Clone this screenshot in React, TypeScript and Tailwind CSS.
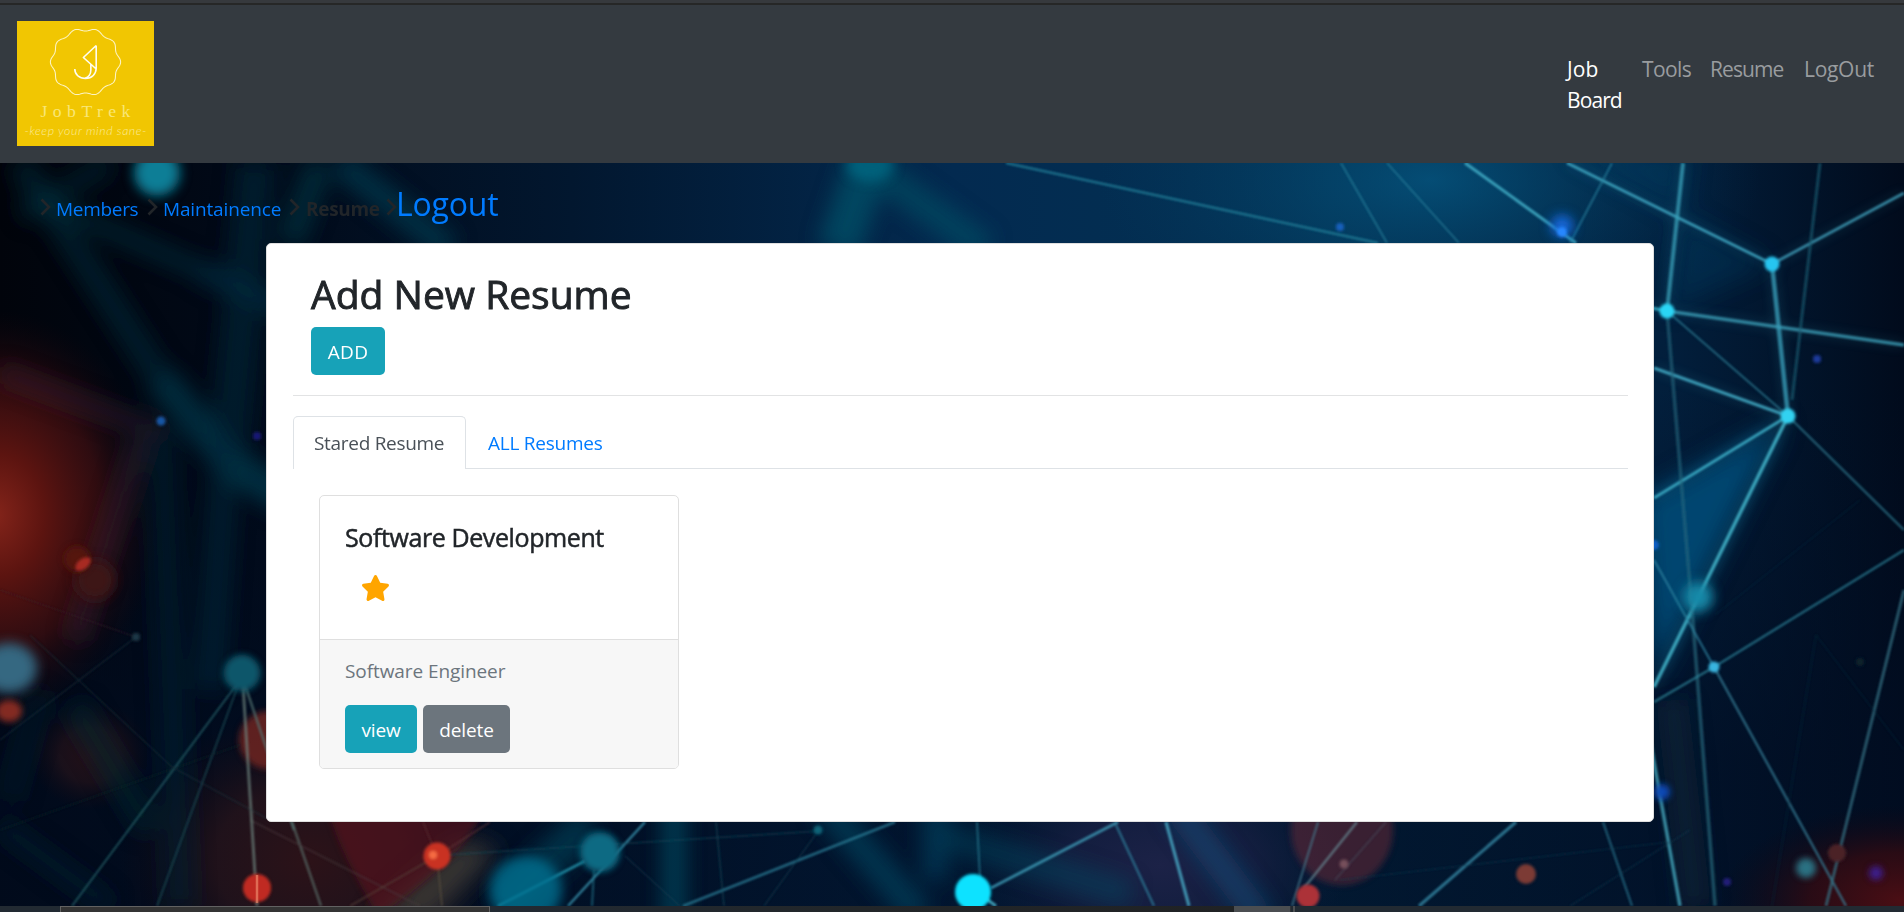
import React from "react";

const badgePath =
  Array.from({ length: 181 }, (_, i) => {
    const t = (i * 2 * Math.PI) / 180;
    const r = 32.4 + 1.4 * Math.cos(10 * t);
    return `${i === 0 ? "M" : "L"}${(80 + (r - 1) * Math.cos(t)).toFixed(2)} ${(62 + r * Math.sin(t)).toFixed(2)}`;
  }).join(" ") + "Z";

function Logo() {
  return (
    <svg className="h-[125px] w-[137px] shrink-0" viewBox="16 21 128 125" preserveAspectRatio="none">
      <rect x="16" y="21" width="128" height="125" fill="#f1c602" />
      <path d={badgePath} fill="none" stroke="#fdf4c4" strokeWidth="1" />
      <path
        d="M90 45.5 78 57.5 90 69M90 45.5V68C90 74 86 78.5 80 78.5 74 78.5 70 74.500 70 69M85 64V70C85 74 83 77 79.500 78.300"
        fill="none"
        stroke="#fffdf0"
        strokeWidth="1.5"
        strokeLinejoin="round"
      />
      <text x="38" y="117" fontSize="16.5" textLength="84" fill="#f9e678" fontFamily="Liberation Serif, serif">
        JobTrek
      </text>
      <text x="23" y="135" fontSize="11.5" textLength="114" fill="#fbeb9c" fontStyle="italic" fontWeight="300" fontFamily="Lato, sans-serif">
        -keep your mind sane-
      </text>
    </svg>
  );
}

type Line = [number, number, number, number, number, string, number];

const sharpLines: Line[] = [
  [1567, 163, 1772, 264, 3, "#3fa9c4", 0.85],
  [1772, 264, 1904, 193, 3, "#3f9fba", 0.8],
  [1683, 163, 1667, 311, 4, "#3aa0b8", 0.75],
  [1560, 290, 1667, 311, 3, "#38b8d0", 0.8],
  [1667, 311, 1904, 345, 3.5, "#3fa3bd", 0.75],
  [1654, 368, 1788, 416, 3, "#46b4cf", 0.8],
  [1772, 264, 1788, 416, 4.5, "#3aa0bb", 0.75],
  [1788, 416, 1654, 498, 3, "#3eb0c8", 0.85],
  [1788, 416, 1654, 687, 3.6, "#43b5ca", 0.85],
  [1667, 311, 1788, 416, 1.8, "#2f8299", 0.7],
  [1820, 163, 1792, 400, 3, "#1f6075", 0.65],
  [1788, 416, 1904, 530, 2.4, "#2e7388", 0.75],
  [1667, 311, 1692, 610, 3.5, "#286c80", 0.6],
  [1692, 610, 1715, 906, 3.5, "#286c80", 0.65],
  [1654, 560, 1714, 667, 2, "#2f86a2", 0.75],
  [1714, 667, 1846, 906, 2.4, "#357f98", 0.75],
  [1654, 702, 1714, 667, 2.2, "#308ba0", 0.7],
  [1714, 667, 1904, 550, 2.2, "#2c7f94", 0.75],
  [1904, 590, 1826, 906, 3, "#347083", 0.75],
  [1650, 740, 1680, 906, 3.5, "#46a5bb", 0.8],
  [1816, 635, 1772, 906, 2, "#123344", 0.3],
  [1816, 635, 1904, 750, 1.5, "#123344", 0.3],
  [1860, 500, 1715, 615, 1.5, "#123848", 0.3],
  [1006, 163, 1378, 243, 2.8, "#23809a", 0.75],
  [1341, 163, 1387, 243, 1.6, "#2c8aa3", 0.65],
  [1387, 163, 1459, 243, 1.6, "#2c8aa3", 0.65],
  [1465, 163, 1576, 243, 3, "#43b0c8", 0.85],
  [1612, 163, 1570, 243, 1.8, "#2b83a0", 0.7],
  [991, 888, 1118, 822, 3, "#3f9fba", 0.8],
  [977, 822, 980, 878, 1.8, "#2a7f96", 0.7],
  [985, 898, 996, 906, 3, "#4fbfd4", 0.8],
  [1116, 825, 1154, 906, 2.2, "#2f819c", 0.75],
  [1166, 822, 1189, 906, 3.2, "#48aac6", 0.8],
  [1318, 822, 1292, 906, 2, "#467e90", 0.7],
  [1357, 822, 1304, 888, 2.4, "#688c96", 0.7],
  [1386, 822, 1335, 880, 1.5, "#4b5868", 0.5],
  [1516, 822, 1419, 906, 3.2, "#3587a3", 0.8],
  [1603, 822, 1632, 906, 2.2, "#27718a", 0.75],
  [1340, 880, 1670, 842, 1.2, "#1a4055", 0.5],
  [1570, 906, 1690, 830, 1.2, "#1a4055", 0.5],
  [498, 906, 585, 861, 3, "#2aa0b8", 0.75],
  [645, 822, 568, 906, 2.5, "#3c9fba", 0.75],
  [594, 870, 592, 906, 2, "#287f95", 0.6],
  [683, 906, 895, 822, 2.5, "#2b7f98", 0.75],
  [445, 855, 820, 831, 1.4, "#1b5262", 0.5],
  [716, 822, 724, 906, 1.4, "#1b5262", 0.6],
  [625, 856, 680, 906, 1.4, "#1b4556", 0.5],
  [816, 834, 764, 906, 1.4, "#1b4556", 0.5],
  [292, 822, 321, 906, 2.5, "#4f5c59", 0.85],
  [250, 820, 420, 906, 1.5, "#4a3a3d", 0.6],
  [437, 856, 350, 906, 1.6, "#564039", 0.7],
  [437, 856, 490, 822, 1.6, "#5b3034", 0.7],
  [437, 856, 423, 822, 1.4, "#5b3034", 0.7],
  [437, 856, 442, 906, 1.6, "#5c5040", 0.7],
  [240, 680, 72, 906, 2, "#25656c", 0.75],
  [240, 680, 157, 906, 1.7, "#1c4f58", 0.75],
  [243, 685, 257, 906, 3, "#6b817b", 0.7],
  [245, 685, 294, 830, 2.5, "#537472", 0.7],
  [0, 590, 136, 637, 1.3, "#38232f", 0.6],
  [0, 740, 136, 637, 1.5, "#1f3a46", 0.5],
  [30, 635, 172, 767, 1.4, "#1a3440", 0.5],
  [172, 767, 266, 818, 1.4, "#244048", 0.5],
  [0, 830, 240, 745, 1.4, "#12252c", 0.5],
];

const beams: Line[] = [
  [20, 163, 160, 378, 26, "#033040", 0.5],
  [160, 378, 232, 465, 32, "#044c60", 0.5],
  [232, 465, 290, 500, 34, "#045065", 0.5],
  [40, 200, 200, 270, 18, "#033848", 0.5],
  [200, 270, 300, 315, 24, "#03384d", 0.55],
  [110, 163, 20, 215, 22, "#032e3a", 0.5],
  [256, 163, 228, 460, 40, "#02293a", 0.6],
  [162, 430, 180, 906, 32, "#032836", 0.45],
  [224, 470, 210, 690, 28, "#03394b", 0.4],
  [0, 372, 160, 432, 18, "#3a2230", 0.5],
  [140, 440, 75, 640, 22, "#332331", 0.45],
  [75, 705, 150, 830, 26, "#0a2a33", 0.5],
  [0, 825, 110, 906, 22, "#042530", 0.5],
  [40, 690, 10, 800, 22, "#042530", 0.4],
  [320, 163, 290, 243, 28, "#033646", 0.6],
  [340, 163, 450, 250, 28, "#034055", 0.6],
  [868, 163, 838, 250, 42, "#065c72", 0.6],
  [875, 170, 985, 250, 30, "#055468", 0.55],
  [674, 800, 674, 926, 22, "#055269", 0.65],
  [825, 805, 920, 916, 30, "#064c68", 0.55],
  [935, 805, 935, 880, 26, "#064c68", 0.5],
  [940, 835, 1130, 895, 28, "#105068", 0.4],
  [1175, 805, 1262, 920, 28, "#154f7c", 0.55],
  [1672, 700, 1695, 906, 32, "#173646", 0.35],
  [590, 822, 500, 906, 36, "#05455c", 0.6],
];

const renderLines = (lines: Line[]) =>
  lines.map(([x1, y1, x2, y2, w, c, o], i) => (
    <line key={i} x1={x1} y1={y1} x2={x2} y2={y2} strokeWidth={w} stroke={c} opacity={o} />
  ));

function NetworkBackdrop() {
  return (
    <svg className="absolute inset-0 h-full w-full" viewBox="0 163 1904 743" preserveAspectRatio="none" aria-hidden="true">
      <defs>
        <linearGradient id="base">
          <stop offset="0" stopColor="#01040b" />
          <stop offset=".14" stopColor="#010a19" />
          <stop offset=".3" stopColor="#02172f" />
          <stop offset=".5" stopColor="#032a50" />
          <stop offset=".7" stopColor="#033253" />
          <stop offset=".88" stopColor="#021e3b" />
          <stop offset="1" stopColor="#010b1c" />
        </linearGradient>
        <linearGradient id="floor" x1="0" y1="0" x2="0" y2="1">
          <stop offset=".3" stopColor="#010d22" stopOpacity="0" />
          <stop offset=".8" stopColor="#010d22" stopOpacity=".7" />
        </linearGradient>
        <radialGradient id="ember">
          <stop offset="0" stopColor="#84241a" />
          <stop offset=".3" stopColor="#5c1410" />
          <stop offset=".65" stopColor="#360d10" stopOpacity=".85" />
          <stop offset="1" stopColor="#14060d" stopOpacity="0" />
        </radialGradient>
        <radialGradient id="azure">
          <stop offset="0" stopColor="#05557f" stopOpacity=".8" />
          <stop offset="1" stopColor="#033a60" stopOpacity="0" />
        </radialGradient>
        <radialGradient id="cornerRed">
          <stop offset="0" stopColor="#4a0e14" />
          <stop offset=".5" stopColor="#330b12" stopOpacity=".8" />
          <stop offset="1" stopColor="#100713" stopOpacity="0" />
        </radialGradient>
        <radialGradient id="maroon">
          <stop offset="0" stopColor="#2c1218" />
          <stop offset=".5" stopColor="#25131a" stopOpacity=".85" />
          <stop offset="1" stopColor="#150b14" stopOpacity="0" />
        </radialGradient>
        <radialGradient id="violet">
          <stop offset="0" stopColor="#1c2247" />
          <stop offset=".5" stopColor="#192044" stopOpacity=".75" />
          <stop offset="1" stopColor="#101c3c" stopOpacity="0" />
        </radialGradient>
        <filter id="soft" filterUnits="userSpaceOnUse" x="-60" y="103" width="2024" height="863">
          <feGaussianBlur stdDeviation="12" />
        </filter>
        <filter id="halo" filterUnits="userSpaceOnUse" x="-60" y="103" width="2024" height="863">
          <feGaussianBlur stdDeviation="6" />
        </filter>
        <filter id="glow" filterUnits="userSpaceOnUse" x="-60" y="103" width="2024" height="863">
          <feGaussianBlur stdDeviation="3" />
        </filter>
        <filter id="dot" filterUnits="userSpaceOnUse" x="-60" y="103" width="2024" height="863">
          <feGaussianBlur stdDeviation="1.8" />
        </filter>
        <filter id="line" filterUnits="userSpaceOnUse" x="-60" y="103" width="2024" height="863">
          <feGaussianBlur stdDeviation=".8" />
        </filter>
        <filter id="beam" filterUnits="userSpaceOnUse" x="-60" y="103" width="2024" height="863">
          <feGaussianBlur stdDeviation="10" />
        </filter>
      </defs>
      <rect y="163" width="1904" height="743" fill="url(#base)" />
      <rect y="163" width="1904" height="743" fill="url(#floor)" />
      <ellipse cx="1430" cy="180" rx="330" ry="160" fill="url(#azure)" />
      <ellipse cx="-5" cy="515" rx="165" ry="205" fill="url(#ember)" />
      <ellipse cx="1900" cy="900" rx="180" ry="95" fill="url(#cornerRed)" />
      <ellipse cx="310" cy="860" rx="190" ry="150" fill="url(#maroon)" />
      <ellipse cx="90" cy="755" rx="60" ry="55" fill="url(#maroon)" opacity=".8" />
      <ellipse cx="1160" cy="865" rx="190" ry="110" fill="url(#violet)" />
      <g filter="url(#soft)">
        <path d="M1640 500 1784 420 1654 680Z" fill="#034a77" opacity=".9" />
        <path d="M1567 150 1690 150 1667 311 1772 264Z" fill="#08466a" opacity=".35" />
        <path d="M370 920 460 840 500 850 430 920Z" fill="#42403a" opacity=".8" />
      </g>
      <g filter="url(#beam)">{renderLines(beams)}</g>
      <g filter="url(#glow)">
        <path d="M328 810H485C465 850 430 880 378 916 358 880 340 850 328 810Z" fill="#571720" opacity=".65" />
        <ellipse cx="1342" cy="830" rx="51" ry="55" fill="#682737" opacity=".55" />
        <circle cx="268" cy="740" r="29" fill="#7c2923" opacity=".75" />
      </g>
      <g filter="url(#halo)" opacity=".4">{renderLines(sharpLines.slice(0, 9))}</g>
      <g filter="url(#line)">{renderLines(sharpLines)}</g>
      <g filter="url(#halo)">
        <circle cx="157" cy="173" r="23" fill="#097e96" />
        <ellipse cx="526" cy="890" rx="36" ry="34" fill="#067090" opacity=".8" />
        <ellipse cx="870" cy="165" rx="24" ry="16" fill="#087189" opacity=".7" />
        <ellipse cx="9" cy="668" rx="28" ry="25" fill="#356781" />
        <circle cx="1698" cy="597" r="15" fill="#1589a8" />
        <circle cx="1562" cy="226" r="11" fill="#126be0" />
        <circle cx="95" cy="580" r="20" fill="#3d1516" />
      </g>
      <g filter="url(#glow)">
        <circle cx="1806" cy="868" r="10" fill="#2c7182" />
        <circle cx="242" cy="673" r="18.5" fill="#07566b" />
        <circle cx="600" cy="852" r="20" fill="#086b83" />
        <circle cx="77" cy="559" r="13" fill="#541710" />
        <ellipse cx="9" cy="711" rx="13" ry="11" fill="#832b24" />
        <circle cx="1876" cy="873" r="7" fill="#3d1e8c" />
        <circle cx="1662" cy="792" r="8" fill="#1048b5" />
      </g>
      <g filter="url(#dot)">
        <circle cx="973" cy="892" r="18" fill="#10e2ff" />
        <circle cx="1772" cy="264" r="7.500" fill="#26c5f0" />
        <circle cx="1667" cy="311" r="7.500" fill="#2ad6f5" />
        <circle cx="1788" cy="416" r="7.500" fill="#30d2f1" />
        <circle cx="1714" cy="667" r="5.500" fill="#38b4df" />
        <circle cx="437" cy="856" r="13.500" fill="#c93324" />
        <circle cx="433" cy="855" r="4" fill="#f56b42" />
        <circle cx="257" cy="888" r="14" fill="#c02c20" />
        <circle cx="1308" cy="896" r="11.500" fill="#ac3137" />
        <circle cx="1526" cy="874" r="10" fill="#7b3a35" />
        <circle cx="1837" cy="853" r="9" fill="#4b2427" />
        <ellipse cx="83" cy="564" rx="9" ry="5" transform="rotate(-38 83 564)" fill="#a82a24" />
        <circle cx="161" cy="421" r="4.500" fill="#1257a5" />
        <circle cx="257" cy="436" r="4" fill="#171577" />
        <circle cx="136" cy="637" r="4" fill="#1b3947" />
        <circle cx="1340" cy="227" r="4" fill="#1460bd" />
        <circle cx="1562" cy="232" r="5" fill="#2687ff" />
        <circle cx="1654" cy="545" r="5" fill="#105fc4" />
        <circle cx="1817" cy="359" r="4" fill="#1c3a9b" />
        <circle cx="1727" cy="882" r="4" fill="#241e79" />
        <circle cx="1860" cy="662" r="4" fill="#0a202c" />
        <circle cx="818" cy="830" r="4.500" fill="#0f6478" />
        <circle cx="1344" cy="864" r="4.500" fill="#76505c" />
      </g>
      <path d="M257 875V903" stroke="#f09070" strokeWidth="2.500" opacity=".65" />
    </svg>
  );
}

function Chevron() {
  return (
    <svg className="h-[18px] w-[11px] shrink-0" viewBox="0 0 11 18" fill="none" stroke="#212529" strokeWidth="2.600">
      <path d="M1.500 1.500 9 9 1.500 16.500" />
    </svg>
  );
}

export default function App() {
  return (
    <div className="flex h-[912px] w-full flex-col overflow-hidden bg-[#343a40] font-['Open_Sans','Noto_Sans',sans-serif] text-[19px] text-[#212529]">
      <div className="h-[5px] shrink-0 border-b-2 border-[#262727] bg-[#36393d]" />
      <header className="flex h-[158px] shrink-0 items-start bg-[#343a40] pt-4 pr-[30px] pl-[17px]">
        <Logo />
        <nav className="mt-[33px] ml-auto flex items-start text-[21px] leading-[31px] text-[#999c9f]">
          <a className="w-[75px] text-white">
            <span className="block tracking-[0.1px]">Job</span>
            <span className="block tracking-[-0.9px]">Board</span>
          </a>
          <a className="w-[68px] tracking-[-0.6px]">Tools</a>
          <a className="w-[94px] tracking-[-0.9px]">Resume</a>
          <a className="w-[70px] tracking-[-0.3px] whitespace-nowrap">LogOut</a>
        </nav>
      </header>

      <main className="relative h-[743px] shrink-0 overflow-hidden">
        <NetworkBackdrop />
        <div className="relative">
          <div className="flex h-20 items-baseline pt-[17px] pl-10 leading-[48px] whitespace-nowrap text-[#007bff]">
            <Chevron />
            <a className="ml-[5px] w-[91px] tracking-[-0.3px]">Members</a>
            <Chevron />
            <a className="ml-[5px] w-[126px] tracking-[-0.15px]">Maintainence</a>
            <Chevron />
            <b className="ml-[6px] w-[80px] tracking-[-0.3px] text-[#212529]">Resume</b>
            <Chevron />
            <a className="-ml-px text-[32px] tracking-[-0.2px]">Logout</a>
          </div>

          <section className="ml-[266px] h-[579px] w-[1388px] rounded-[5px] border border-[#dfdfdf] bg-white pt-[25px] pr-[25px] pl-[26px]">
            <div className="h-[127px] border-b border-[#e2e3e4] pl-[18px]">
              <h1 className="h-[58px] text-[39px] leading-[50px] font-medium [-webkit-text-stroke:0.9px]">Add New Resume</h1>
              <button className="h-12 w-[74px] rounded-[5px] bg-[#17a2b8] pt-0.5 tracking-[0.3px] text-white">ADD</button>
            </div>
            <div className="mt-5 flex h-[53px] items-stretch border-b border-[#dee2e6] leading-[52px] whitespace-nowrap">
              <a className="-mb-px w-[173px] rounded-t-[5px] border border-b-0 border-[#dee2e6] bg-white pl-5 tracking-[-0.3px] text-[#495057]">
                Stared Resume
              </a>
              <a className="pt-px pl-[22px] tracking-[-0.25px] text-[#007bff]">ALL Resumes</a>
            </div>
            <article className="mt-[26px] ml-[26px] flex h-[274px] w-[360px] flex-col rounded-[5px] border border-[#dfdfdf] bg-white">
              <div className="h-[143px] px-[25px] pt-6">
                <h2 className="text-[25px] leading-[34px] font-medium tracking-[-0.4px] whitespace-nowrap [-webkit-text-stroke:0.5px]">
                  Software Development
                </h2>
                <svg className="mt-[21px] ml-[17px] h-[26px] w-[27px]" viewBox="20 0 536 512" preserveAspectRatio="none" fill="#ffa500">
                  <path d="M259.300 17.800L194 150.200 47.900 171.500c-26.200 3.800-36.700 36.100-17.700 54.600l105.700 103-25 145.500c-4.500 26.300 23.200 46 46.400 33.700L288 439.600l130.700 68.700c23.200 12.200 50.900-7.400 46.400-33.700l-25-145.500 105.700-103c19-18.500 8.500-50.800-17.700-54.600L382 150.200 316.700 17.800c-11.700-23.600-45.600-23.900-57.400 0z" />
                </svg>
              </div>
              <div className="flex-1 rounded-b-[4px] border-t border-[#dfdfdf] bg-[#f7f7f7] px-[25px] pt-4">
                <p className="leading-[30px] tracking-[-0.08px] text-[#6c757d]">Software Engineer</p>
                <div className="mt-[19px] flex gap-1.5 text-white">
                  <button className="h-12 w-[72px] rounded-[5px] bg-[#17a2b8] pt-0.5 tracking-[-0.2px]">view</button>
                  <button className="h-12 w-[87px] rounded-[5px] bg-[#6c757d] pt-0.5 tracking-[-0.1px]">delete</button>
                </div>
              </div>
            </article>
          </section>
        </div>
      </main>

      <footer className="flex h-1.5 shrink-0 bg-[#222a32]">
        <div className="ml-[60px] w-[430px] border border-b-0 border-[#626262] bg-[#343434]" />
        <div className="w-[744px] bg-[linear-gradient(90deg,#222a33,#222629,#202224)]" />
        <div className="w-[57px] border-r border-[#303336] bg-[#4b4e51]" />
        <div className="ml-0.5 w-[2px] bg-[#4b4e51]" />
      </footer>
    </div>
  );
}
